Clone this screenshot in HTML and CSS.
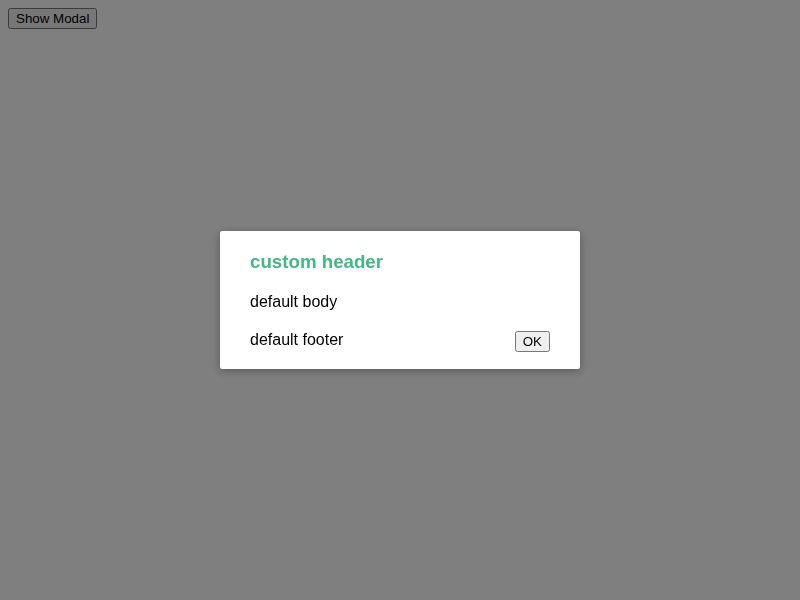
FILE: index.html
```html
<!DOCTYPE html>
<html>
<head>
<meta charset="utf-8">
<link rel="stylesheet" href="styles.css">
</head>
<body>
<button class="show-btn">Show Modal</button>
<div class="modal-mask">
  <div class="modal-wrapper">
    <div class="modal-container">
      <div class="modal-header"><h3>custom header</h3></div>
      <div class="modal-body">default body</div>
      <div class="modal-footer">default footer<button class="modal-default-button">OK</button></div>
    </div>
  </div>
</div>
</body>
</html>
```
FILE: styles.css
```css
body {
  font-family: "Liberation Sans", Arial, sans-serif;
}
button {
  font-family: "Liberation Sans", Arial, sans-serif;
}
.modal-mask {
  position: fixed;
  z-index: 9998;
  top: 0;
  left: 0;
  width: 100%;
  height: 100%;
  background-color: rgba(0, 0, 0, 0.5);
  display: table;
}
.modal-wrapper {
  display: table-cell;
  vertical-align: middle;
}
.modal-container {
  width: 300px;
  margin: 0 auto;
  padding: 20px 30px;
  background-color: #fff;
  border-radius: 2px;
  box-shadow: 0 2px 8px rgba(0, 0, 0, 0.33);
}
.modal-header h3 {
  margin-top: 0;
  color: #42b983;
}
.modal-body {
  margin: 20px 0;
}
.modal-default-button {
  float: right;
}
```
